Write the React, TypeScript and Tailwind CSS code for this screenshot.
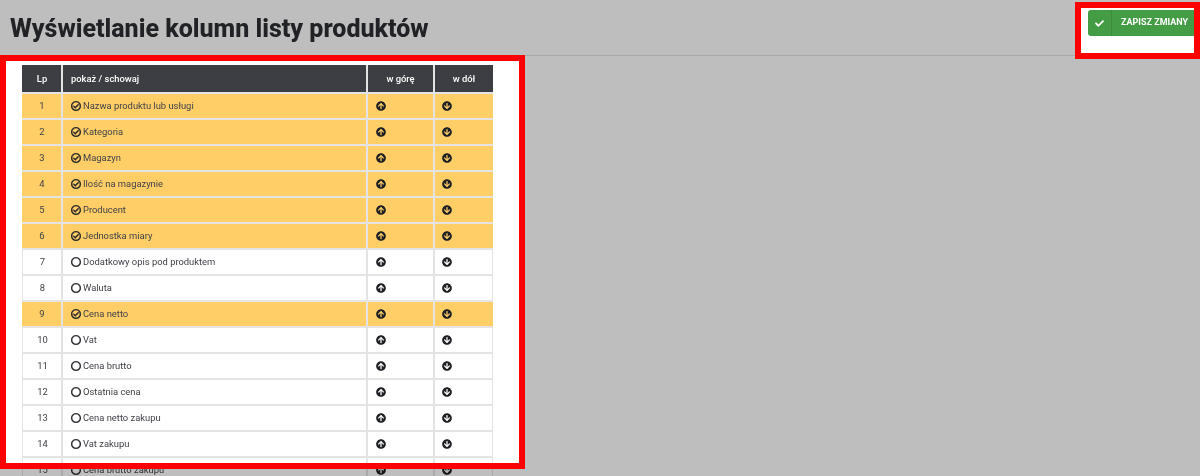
import { FaArrowCircleDown, FaArrowCircleUp, FaCheck, FaRegCheckCircle, FaRegCircle } from "react-icons/fa";

const rows = [
  { name: "Nazwa produktu lub usługi", on: true },
  { name: "Kategoria", on: true },
  { name: "Magazyn", on: true },
  { name: "Ilość na magazynie", on: true },
  { name: "Producent", on: true },
  { name: "Jednostka miary", on: true },
  { name: "Dodatkowy opis pod produktem", on: false },
  { name: "Waluta", on: false },
  { name: "Cena netto", on: true },
  { name: "Vat", on: false },
  { name: "Cena brutto", on: false },
  { name: "Ostatnia cena", on: false },
  { name: "Cena netto zakupu", on: false },
  { name: "Vat zakupu", on: false },
  { name: "Cena brutto zakupu", on: false },
];

export default function App() {
  return (
    <div className="relative h-[476px] w-[1200px] overflow-hidden bg-[#bebebe] font-['Roboto',sans-serif]">
      <header className="flex h-[56px] justify-between border-b border-[#a9a9a9]">
        <h1 className="pl-[10px] pt-[12px] text-[25px] leading-[34px] font-extrabold text-[#212226]">
          Wyświetlanie kolumn listy produktów
        </h1>
        <div className="mt-[2px] h-[57px] w-[125px] border-[6px] border-[#ff0000] bg-white pl-[7px] pt-[2px]">
          <button className="flex h-[26px] w-[106px] items-center rounded-l-[3px] bg-[#449d44] text-white">
            <span className="flex h-full w-[24px] items-center justify-center border-r border-[#3d8b3d]">
              <FaCheck className="size-[9px]" />
            </span>
            <span className="pl-[9px] text-[9px] font-bold whitespace-nowrap uppercase">Zapisz zmiany</span>
          </button>
        </div>
      </header>

      <div className="w-[525px] bg-white pl-[22px] pt-[9px]">
        <table className="w-[471px] table-fixed border-separate border-spacing-0 text-[9.4px] text-[#3f4147]">
          <colgroup>
            <col className="w-[41px]" />
            <col className="w-[305px]" />
            <col className="w-[67px]" />
            <col className="w-[58px]" />
          </colgroup>
          <thead>
            <tr className="h-[29px] bg-[#3c3e43] text-white font-medium">
              <th className="border-r-2 border-b-2 border-[#e4e4e4] pl-px pt-px font-medium">Lp</th>
              <th className="border-r-2 border-b-2 border-[#e4e4e4] pl-[8px] pt-px text-left font-medium">pokaż / schowaj</th>
              <th className="border-r-2 border-b-2 border-[#e4e4e4] pt-px font-medium">w górę</th>
              <th className="border-b-2 border-[#e4e4e4] pt-px font-medium">w dół</th>
            </tr>
          </thead>
          <tbody>
            {rows.map((row, index) => (
              <tr key={row.name} className={`h-[26px] ${row.on ? "bg-[#ffce67]" : "bg-white"}`}>
                <td className={`border-r-2 border-b-2 border-[#e4e4e4] pl-px pt-px text-center ${row.on ? "" : "border-l"}`}>{index + 1}</td>
                <td className="border-r-2 border-b-2 border-[#e4e4e4] pl-[8px] pt-px">
                  <span className="flex items-center gap-[2px]">
                    {row.on ? (
                      <FaRegCheckCircle className="size-[10px] text-[#1f2024]" stroke="currentColor" strokeWidth={24} />
                    ) : (
                      <FaRegCircle className="size-[10px] text-[#1f2024]" stroke="currentColor" strokeWidth={24} />
                    )}
                    {row.name}
                  </span>
                </td>
                <td className="border-r-2 border-b-2 border-[#e4e4e4] pl-[8px]">
                  <FaArrowCircleUp className="-mt-[1px] size-[10px] text-[#1f2024]" />
                </td>
                <td className={`border-b-2 border-[#e4e4e4] pl-[7px] ${row.on ? "" : "border-r"}`}>
                  <FaArrowCircleDown className="-mt-[1px] size-[10px] text-[#1f2024]" />
                </td>
              </tr>
            ))}
          </tbody>
        </table>
      </div>

      {/* annotation frame + dimmed strip under it */}
      <div className="absolute left-0 top-[55px] h-[414px] w-[525px] border-[6px] border-[#ff0000]" />
      <div className="absolute left-0 top-[469px] h-[7px] w-[525px] bg-[#bebebe] mix-blend-multiply" />
    </div>
  );
}
